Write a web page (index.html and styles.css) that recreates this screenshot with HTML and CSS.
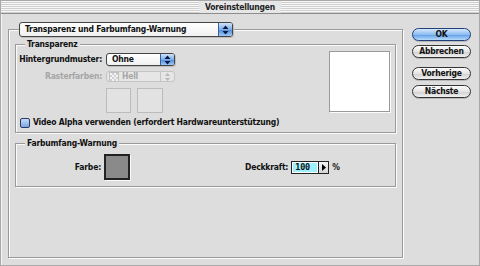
FILE: index.html
```html
<!DOCTYPE html>
<html lang="de">
<head>
    <meta charset="UTF-8">
    <title>Voreinstellungen</title>
    <link rel="stylesheet" href="styles.css">
</head>
<body>
    <div class="window">
        <div class="titlebar"><span class="title">Voreinstellungen</span></div>
        <div class="content">
            <div class="outer">
                <div class="popup popup-wide">
                    <span class="popup-text">Transparenz und Farbumfang-Warnung</span>
                    <span class="arrows"><svg width="7" height="10" viewBox="0 0 7 10"><polygon points="0.5,4 3.5,0.5 6.5,4" fill="#0a1a40"/><polygon points="0.5,6 3.5,9.5 6.5,6" fill="#0a1a40"/></svg></span>
                </div>

                <div class="group group-trans">
                    <div class="legend">Transparenz</div>
                    <div class="trans-row">
                        <div class="form">
                            <div class="field">
                                <label class="field-label">Hintergrundmuster:</label>
                                <div class="popup popup-small">
                                    <span class="popup-text">Ohne</span>
                                    <span class="arrows"><svg width="7" height="10" viewBox="0 0 7 10"><polygon points="0.5,4 3.5,0.5 6.5,4" fill="#0a1a40"/><polygon points="0.5,6 3.5,9.5 6.5,6" fill="#0a1a40"/></svg></span>
                                </div>
                            </div>
                            <div class="field">
                                <label class="field-label disabled">Rasterfarben:</label>
                                <div class="popup popup-disabled">
                                    <span class="checker"></span>
                                    <span class="popup-text">Hell</span>
                                    <span class="arrows-off"><svg width="7" height="10" viewBox="0 0 7 10"><polygon points="1,4 3.5,1 6,4" fill="#b8b8b8"/><polygon points="1,6 3.5,9 6,6" fill="#b8b8b8"/></svg></span>
                                </div>
                            </div>
                            <div class="field">
                                <span></span>
                                <div class="swatches">
                                    <div class="swatch-box"></div>
                                    <div class="swatch-box wide"></div>
                                </div>
                            </div>
                        </div>
                        <div class="preview"></div>
                    </div>
                    <label class="check"><span class="checkbox"></span>Video Alpha verwenden (erfordert Hardwareunterstützung)</label>
                </div>

                <div class="group group-gamut">
                    <div class="legend">Farbumfang-Warnung</div>
                    <div class="gamut-row">
                        <span class="gamut-label">Farbe:</span>
                        <span class="color-swatch"></span>
                        <span class="deck-label">Deckkraft:</span>
                        <span class="num">
                            <span class="num-val">100</span>
                            <span class="num-btn"><svg width="4" height="7" viewBox="0 0 4 7"><polygon points="0,0 4,3.5 0,7" fill="#000"/></svg></span>
                        </span>
                        <span class="pct">%</span>
                    </div>
                </div>
            </div>

            <div class="buttons">
                <button class="btn btn-default">OK</button>
                <button class="btn btn-cancel">Abbrechen</button>
                <button class="btn btn-prev">Vorherige</button>
                <button class="btn">Nächste</button>
            </div>
        </div>
    </div>
</body>
</html>
```

FILE: styles.css
```css
body {
    margin: 0;
    padding: 0;
    background-color: #dddddd;
    font-family: "DejaVu Sans Condensed", "DejaVu Sans", sans-serif;
    font-stretch: condensed;
    font-weight: bold;
    font-size: 8.5px;
    letter-spacing: -0.2px;
    line-height: 11px;
    color: #111;
}
.window {
    width: 480px;
    height: 266px;
    box-sizing: border-box;
    border: 1px solid #a8a8a8;
    background-color: #dddddd;
    box-shadow: inset 1px 1px 0 #f4f4f4;
}
.titlebar {
    height: 12px;
    border-bottom: 1px solid #8c8c8c;
    background: repeating-linear-gradient(to bottom, #f8f8f8 0, #f8f8f8 1px, #cfcfcf 1px, #cfcfcf 2px);
    display: flex;
    justify-content: center;
    align-items: center;
}
.title {
    background-color: #e6e6e6;
    padding: 0 6px;
    line-height: 12px;
    color: #222;
}
.content {
    display: flex;
    align-items: flex-start;
    padding-left: 7px;
}

/* group boxes */
.outer {
    width: 395px;
    height: 229px;
    margin-top: 15px;
    box-sizing: border-box;
    border: 1px solid #9a9a9a;
    box-shadow: inset 1px 1px 0 #fbfbfb, 1px 1px 0 #fbfbfb;
}
.group {
    box-sizing: border-box;
    width: 381px;
    margin-left: 6px;
    border: 1px solid #9a9a9a;
    box-shadow: inset 1px 1px 0 #fbfbfb, 1px 1px 0 #fbfbfb;
}
.group-trans {
    height: 89px;
    margin-top: 7px;
}
.group-gamut {
    height: 44px;
    margin-top: 10px;
}
.legend {
    width: fit-content;
    margin: -6px 0 0 9px;
    padding: 0 2px;
    background-color: #dddddd;
}

/* popup menus */
.popup {
    display: flex;
    align-items: center;
    box-sizing: border-box;
    border: 1px solid #444;
    border-radius: 3px;
    background: linear-gradient(#ffffff, #f0f0f0);
    box-shadow: 1px 1px 0 #bdbdbd;
    overflow: hidden;
}
.popup-text {
    flex: 1;
    padding-left: 5px;
}
.arrows {
    width: 13px;
    align-self: stretch;
    display: flex;
    align-items: center;
    justify-content: center;
    border-left: 1px solid #3b5f9a;
    background: linear-gradient(#cfe3fb, #7eaee8 50%, #4d8bdc 51%, #9cc8f6);
}
.popup-wide {
    width: 214px;
    height: 15px;
    margin: -8px 0 0 10px;
}
.popup-small {
    width: 69px;
    height: 13px;
}
.popup-disabled {
    width: 69px;
    height: 11px;
    border-color: #c4c4c4;
    background: #e6e6e6;
    box-shadow: none;
    color: #a6a6a6;
}
.popup-disabled .popup-text {
    padding-left: 3px;
}
.checker {
    width: 8px;
    height: 8px;
    margin-left: 2px;
    border: 1px solid #c0c0c0;
    background: repeating-conic-gradient(#d0d0d0 0 25%, #f4f4f4 0 50%) 0 0 / 4px 4px;
}
.arrows-off {
    width: 13px;
    align-self: stretch;
    display: flex;
    align-items: center;
    justify-content: center;
    border-left: 1px solid #c4c4c4;
}

/* transparency section */
.trans-row {
    display: flex;
    align-items: flex-start;
    margin-top: 3px;
}
.form {
    flex: 1;
    display: flex;
    flex-direction: column;
    gap: 5px;
}
.field {
    display: grid;
    grid-template-columns: 86px 69px;
    column-gap: 4px;
    align-items: center;
}
.field-label {
    text-align: right;
}
.field-label.disabled {
    color: #a6a6a6;
}
.swatches {
    display: flex;
    gap: 6px;
    margin-top: 1px;
}
.swatch-box {
    width: 25px;
    height: 25px;
    box-sizing: border-box;
    border: 1px solid #bcbcbc;
    background-color: #e2e2e2;
}
.swatch-box.wide {
    width: 26px;
}
.preview {
    width: 61px;
    height: 61px;
    box-sizing: border-box;
    margin: -2px 5px 0 0;
    border: 1px solid #9a9a9a;
    background-color: #fff;
    box-shadow: 1px 1px 0 #fbfbfb;
}
.check {
    display: flex;
    align-items: center;
    gap: 3px;
    margin: 4px 0 0 4px;
}
.checkbox {
    width: 10px;
    height: 10px;
    box-sizing: border-box;
    border: 1px solid #2a3a66;
    border-radius: 2px;
    background: linear-gradient(#c6dcf7, #7aa6e0);
}

/* gamut section */
.gamut-row {
    display: flex;
    align-items: center;
    margin-top: 5px;
}
.gamut-label {
    width: 85px;
    text-align: right;
}
.color-swatch {
    width: 26px;
    height: 26px;
    box-sizing: border-box;
    margin-left: 3px;
    border: 2px solid #222;
    background-color: #8a8a8a;
    box-shadow: 1px 1px 0 #fbfbfb;
}
.deck-label {
    margin-left: 115px;
}
.num {
    display: flex;
    height: 13px;
    margin-left: 3px;
    box-sizing: border-box;
    border: 1px solid #222;
    background-color: #fff;
}
.num-val {
    width: 22px;
    margin: 1px;
    padding-left: 2px;
    line-height: 9px;
    background-color: #9ff0ff;
    font-family: "DejaVu Sans Mono", monospace;
}
.num-btn {
    width: 9px;
    display: flex;
    align-items: center;
    justify-content: center;
    border-left: 1px solid #222;
    background: linear-gradient(#f4f4f4, #d4d4d4);
}
.pct {
    margin-left: 3px;
}

/* buttons */
.buttons {
    display: flex;
    flex-direction: column;
    margin: 14px 0 0 9px;
}
.btn {
    width: 59px;
    height: 13px;
    padding: 0;
    font: inherit;
    letter-spacing: inherit;
    line-height: 11px;
    color: #111;
    border: 1px solid #333;
    border-radius: 7px;
    background: linear-gradient(#fdfdfd, #e4e4e4 50%, #cfcfcf 51%, #f0f0f0);
    box-shadow: 0 1px 0 #b8b8b8;
}
.btn-default {
    border-color: #22407a;
    background: linear-gradient(#d6e8fc, #8dbcf0 50%, #5d9ae6 51%, #b8dcfb);
}
.btn-cancel {
    margin-top: 4px;
}
.btn-prev {
    margin-top: 9px;
}
.btn-prev + .btn {
    margin-top: 5px;
}
```
